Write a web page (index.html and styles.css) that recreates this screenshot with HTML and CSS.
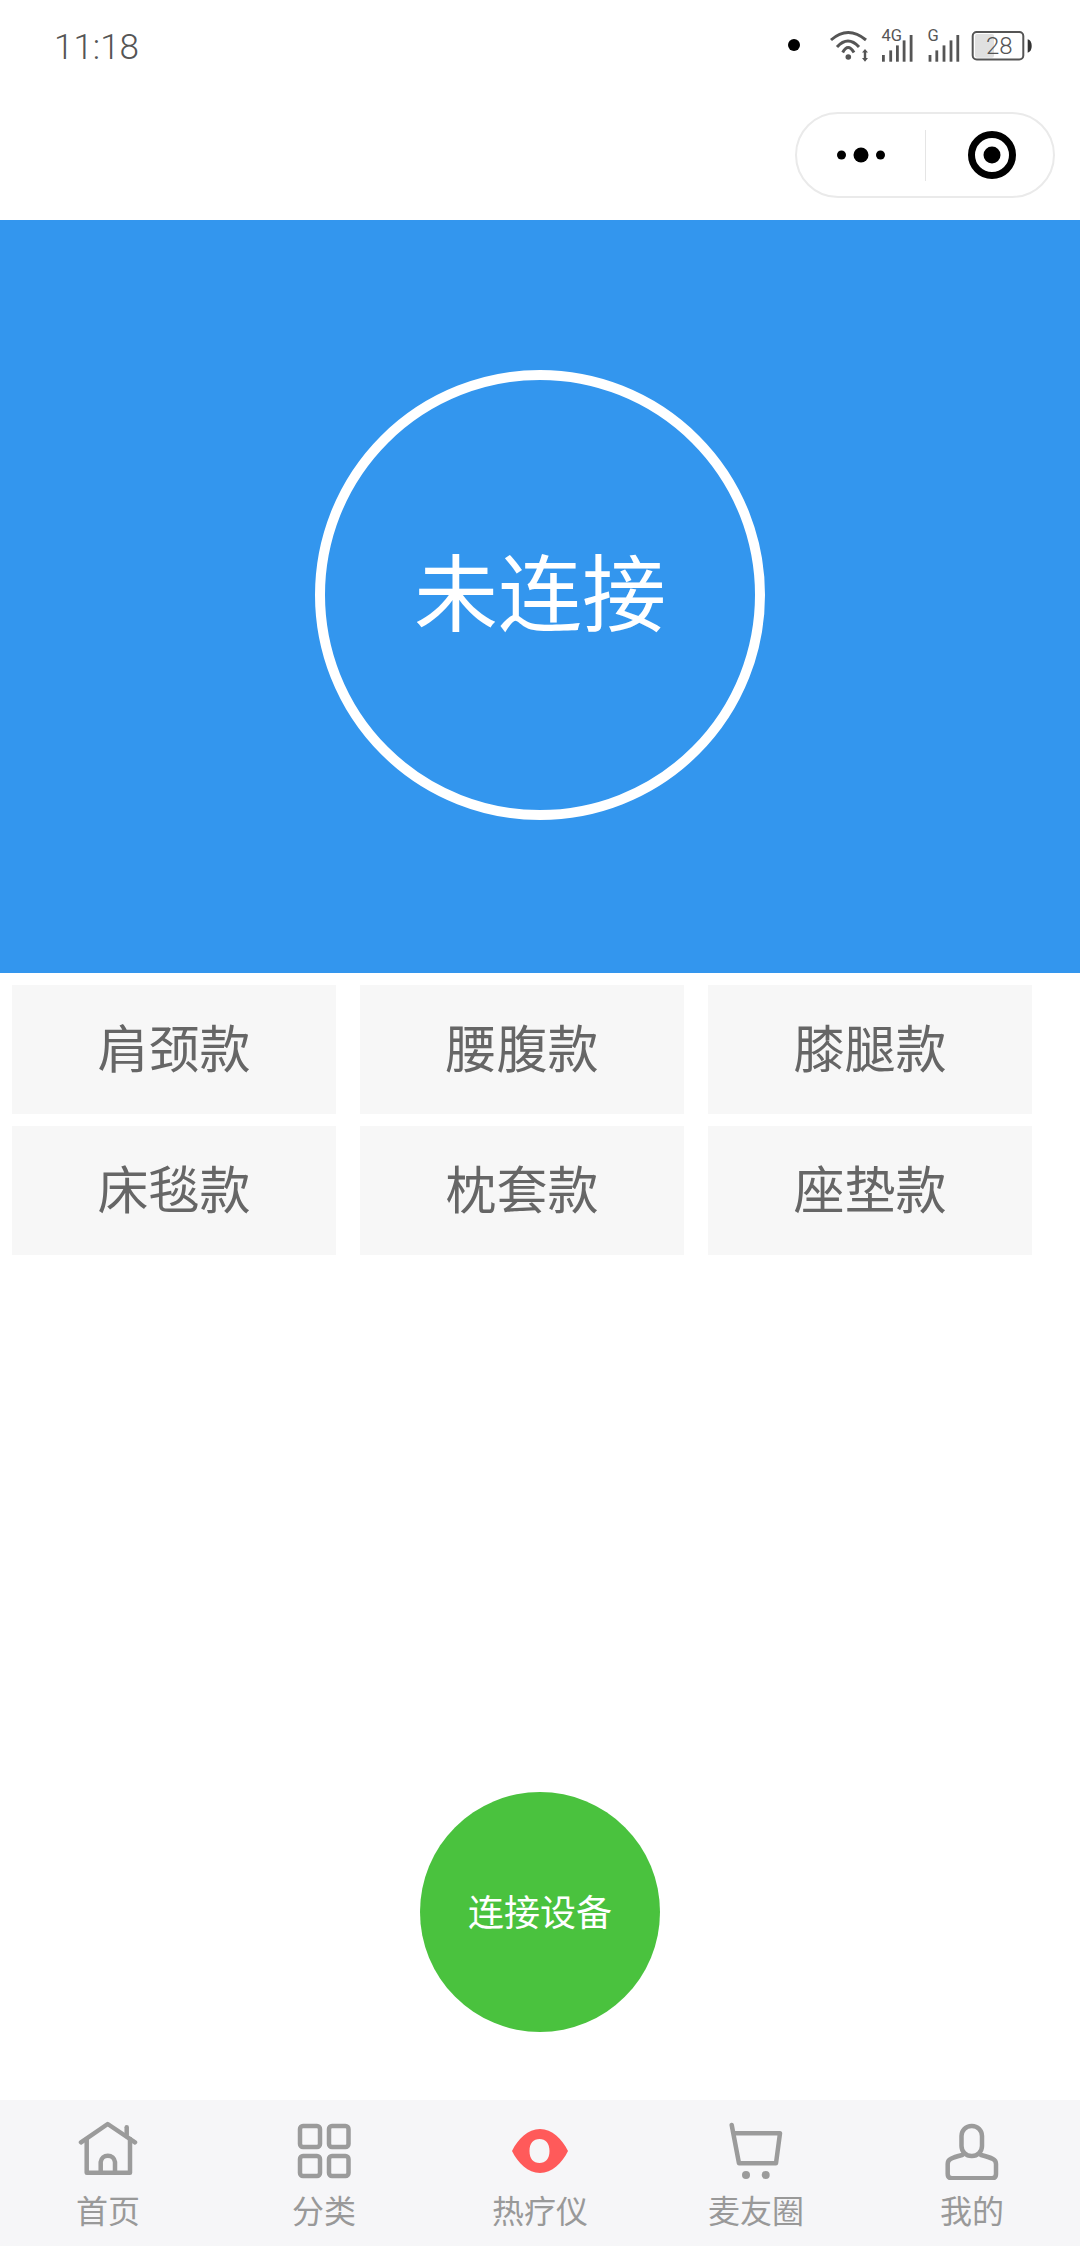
FILE: index.html
```html
<!DOCTYPE html>
<html lang="zh-CN">

<head>
    <meta charset="UTF-8">
    <title>热疗仪</title>
    <meta name="viewport" content="width=device-width, initial-scale=1">
    <link rel="stylesheet" href="styles.css">
</head>

<body>
    <div class="status-bar">
        <span class="time">11:18</span>
        <span class="status-dot"></span>
        <svg class="status-icons" width="206" height="38" viewBox="0 0 206 38">
            <g class="wifi" fill="none" stroke="#555" stroke-width="3">
                <path d="M3 13 Q20 -2 38 13" />
                <path d="M9 20 Q20 8 31 20" />
                <path d="M14.7 25.5 Q20 15.5 26 25.5" />
            </g>
            <circle cx="20.3" cy="30" r="2.8" fill="#555" />
            <path d="M37 22 L40 25.5 H38.2 V31 H40 L37 34.7 L34 31 H35.8 V25.5 H34 Z" fill="#555" />

            <text class="sig-text" x="53.5" y="13.5">4G</text>
            <g fill="#555">
                <rect x="54" y="28" width="2.8" height="6.7" />
                <rect x="61.3" y="23.4" width="2.8" height="11.3" />
                <rect x="68" y="18.4" width="2.8" height="16.3" />
                <rect x="74.7" y="13.4" width="2.8" height="21.3" />
                <rect x="81.7" y="8" width="2.8" height="26.7" />
            </g>

            <text class="sig-text" x="99.5" y="13.5">G</text>
            <g fill="#555">
                <rect x="100.6" y="28" width="2.8" height="6.7" />
                <rect x="107.4" y="23.4" width="2.8" height="11.3" />
                <rect x="114.6" y="18.4" width="2.8" height="16.3" />
                <rect x="121.6" y="13.4" width="2.8" height="21.3" />
                <rect x="128.4" y="8" width="2.8" height="26.7" />
            </g>

            <rect x="147" y="7" width="19" height="23.7" rx="2" fill="#e0e0e0" />
            <rect x="144.7" y="5" width="50.6" height="27.4" rx="4" fill="none" stroke="#555" stroke-width="2" />
            <text class="batt-text" x="158" y="27.4">28</text>
            <path d="M199.7 12.3 Q203.7 13.5 203.7 19 Q203.7 24.5 199.7 25.7 Z" fill="#333" />
        </svg>
    </div>

    <div class="nav-bar">
        <div class="capsule">
            <div class="capsule-part capsule-more">
                <svg width="60" height="20" viewBox="0 0 60 20">
                    <circle cx="10.5" cy="10" r="4.5" />
                    <circle cx="30" cy="10" r="7.5" />
                    <circle cx="49.5" cy="10" r="4.5" />
                </svg>
            </div>
            <div class="capsule-line"></div>
            <div class="capsule-part capsule-target">
                <svg width="50" height="50" viewBox="0 0 50 50">
                    <circle cx="25" cy="25" r="20.5" fill="none" stroke="#000" stroke-width="7" />
                    <circle cx="25" cy="25" r="8.5" />
                </svg>
            </div>
        </div>
    </div>

    <div class="hero">
        <div class="hero-circle">未连接</div>
    </div>

    <div class="types">
        <div class="type-item">肩颈款</div>
        <div class="type-item">腰腹款</div>
        <div class="type-item">膝腿款</div>
        <div class="type-item">床毯款</div>
        <div class="type-item">枕套款</div>
        <div class="type-item">座垫款</div>
    </div>

    <div class="connect-wrap">
        <div class="connect-btn">连接设备</div>
    </div>

    <div class="tab-bar">
        <div class="tab">
            <svg class="tab-icon" width="60" height="60" viewBox="0 0 60 60">
                <path d="M3 22.3 L29.7 4 L57 22.3" />
                <path d="M48.7 7.3 V15" />
                <path d="M8.7 19 V52.7 H52 V19" />
                <path d="M22.7 52.7 V42 A7.2 7.2 0 0 1 37 42 V52.7" />
            </svg>
            <span class="tab-label">首页</span>
        </div>
        <div class="tab">
            <svg class="tab-icon" width="60" height="60" viewBox="0 0 60 60">
                <rect x="6" y="6" width="20" height="21" rx="3" />
                <rect x="35" y="6" width="19.5" height="21" rx="3" />
                <rect x="6" y="36" width="20" height="20" rx="3" />
                <rect x="35" y="36" width="19.5" height="20" rx="3" />
            </svg>
            <span class="tab-label">分类</span>
        </div>
        <div class="tab">
            <svg class="tab-icon tab-icon-on" width="60" height="60" viewBox="0 0 60 60">
                <path fill-rule="evenodd"
                    d="M2 31 C8 19 18 9 30 9 C42 9 52 19 58 31 C52 43 42 53 30 53 C18 53 8 43 2 31 Z M29.5 19 C23.5 19 19.5 23 19.5 31 C19.5 39 23.5 43 29.5 43 C35.5 43 39.5 39 39.5 31 C39.5 23 35.5 19 29.5 19 Z" />
            </svg>
            <span class="tab-label">热疗仪</span>
        </div>
        <div class="tab">
            <svg class="tab-icon" width="60" height="60" viewBox="0 0 60 60">
                <path d="M5.7 5 L13 43.3 H50 L54 13.3 H8" />
                <circle class="tab-dot" cx="20" cy="55" r="4" />
                <circle class="tab-dot" cx="39.7" cy="55" r="4" />
            </svg>
            <span class="tab-label">麦友圈</span>
        </div>
        <div class="tab">
            <svg class="tab-icon" width="60" height="60" viewBox="0 0 60 60">
                <rect x="19.5" y="6" width="20.5" height="30" rx="10" />
                <path d="M20.3 35 Q12 37 8.5 39 Q5.7 40.5 5.7 44 V54 Q5.7 58.3 10 58.3 H50 Q54 58.3 54 54 V44 Q54 40.5 51 39 Q47 37 39 35" />
            </svg>
            <span class="tab-label">我的</span>
        </div>
    </div>
</body>

</html>
```

FILE: styles.css
```css
* {
    box-sizing: border-box;
}

body {
    margin: 0;
    height: 100vh;
    display: flex;
    flex-direction: column;
    background-color: #ffffff;
    font-family: "Noto Sans CJK SC", "Noto Sans", sans-serif;
}

.status-bar {
    height: 90px;
    padding: 0 46px 0 54px;
    display: flex;
    align-items: center;
    flex-shrink: 0;
}

.time {
    font-family: Roboto, sans-serif;
    font-weight: 300;
    font-size: 35px;
    line-height: 40px;
    padding-top: 5px;
    color: #555555;
    margin-right: auto;
}

.status-dot {
    width: 12px;
    height: 12px;
    border-radius: 50%;
    background-color: #000000;
    margin-right: 28px;
}

.status-icons {
    display: block;
    margin-top: 1px;
}

.sig-text {
    font-family: Roboto, sans-serif;
    font-size: 16.5px;
    fill: #555555;
}

.batt-text {
    font-family: Roboto, sans-serif;
    font-size: 24px;
    font-weight: 300;
    fill: #555555;
}

.nav-bar {
    height: 130px;
    padding: 22px 25px 0 0;
    display: flex;
    justify-content: flex-end;
    align-items: flex-start;
    flex-shrink: 0;
}

.capsule {
    width: 260px;
    height: 86px;
    border: 2px solid #eaeaea;
    border-radius: 43px;
    display: flex;
    align-items: center;
}

.capsule-part {
    display: flex;
    justify-content: center;
    align-items: center;
}

.capsule-part svg {
    display: block;
}

.capsule-more {
    width: 128px;
}

.capsule-target {
    width: 127px;
    padding-left: 5px;
}

.capsule-line {
    width: 1px;
    height: 51px;
    background-color: #e5e5e5;
}

.hero {
    height: 753px;
    padding-bottom: 3px;
    background-color: #3396ee;
    display: flex;
    justify-content: center;
    align-items: center;
    flex-shrink: 0;
}

.hero-circle {
    width: 450px;
    height: 450px;
    padding-bottom: 13px;
    border: 10px solid #ffffff;
    border-radius: 50%;
    display: flex;
    justify-content: center;
    align-items: center;
    font-size: 84px;
    color: #ffffff;
}

.types {
    padding: 12px;
    display: grid;
    grid-template-columns: repeat(3, 324px);
    grid-auto-rows: 129px;
    gap: 12px 24px;
}

.type-item {
    padding-bottom: 8px;
    background-color: #f7f7f7;
    display: flex;
    justify-content: center;
    align-items: center;
    font-size: 51px;
    color: #666666;
}

.connect-wrap {
    flex: 1;
    padding-bottom: 68px;
    display: flex;
    justify-content: center;
    align-items: flex-end;
}

.connect-btn {
    width: 240px;
    height: 240px;
    padding-bottom: 5px;
    border-radius: 50%;
    background-color: #4ac23e;
    display: flex;
    justify-content: center;
    align-items: center;
    font-size: 36px;
    color: #ffffff;
}

.tab-bar {
    height: 146px;
    padding-top: 20px;
    background-color: #f6f6f8;
    display: flex;
    flex-shrink: 0;
}

.tab {
    flex: 1;
    display: flex;
    flex-direction: column;
    align-items: center;
}

.tab-icon {
    display: block;
    fill: none;
    stroke: #9b9b9b;
    stroke-width: 4.5;
    stroke-linecap: round;
    stroke-linejoin: round;
}

.tab-icon-on {
    fill: #ff5a5a;
    stroke: none;
}

.tab-dot {
    fill: #9b9b9b;
    stroke: none;
}

.tab-label {
    margin-top: 9px;
    font-size: 32px;
    line-height: 40px;
    color: #999999;
}
```
